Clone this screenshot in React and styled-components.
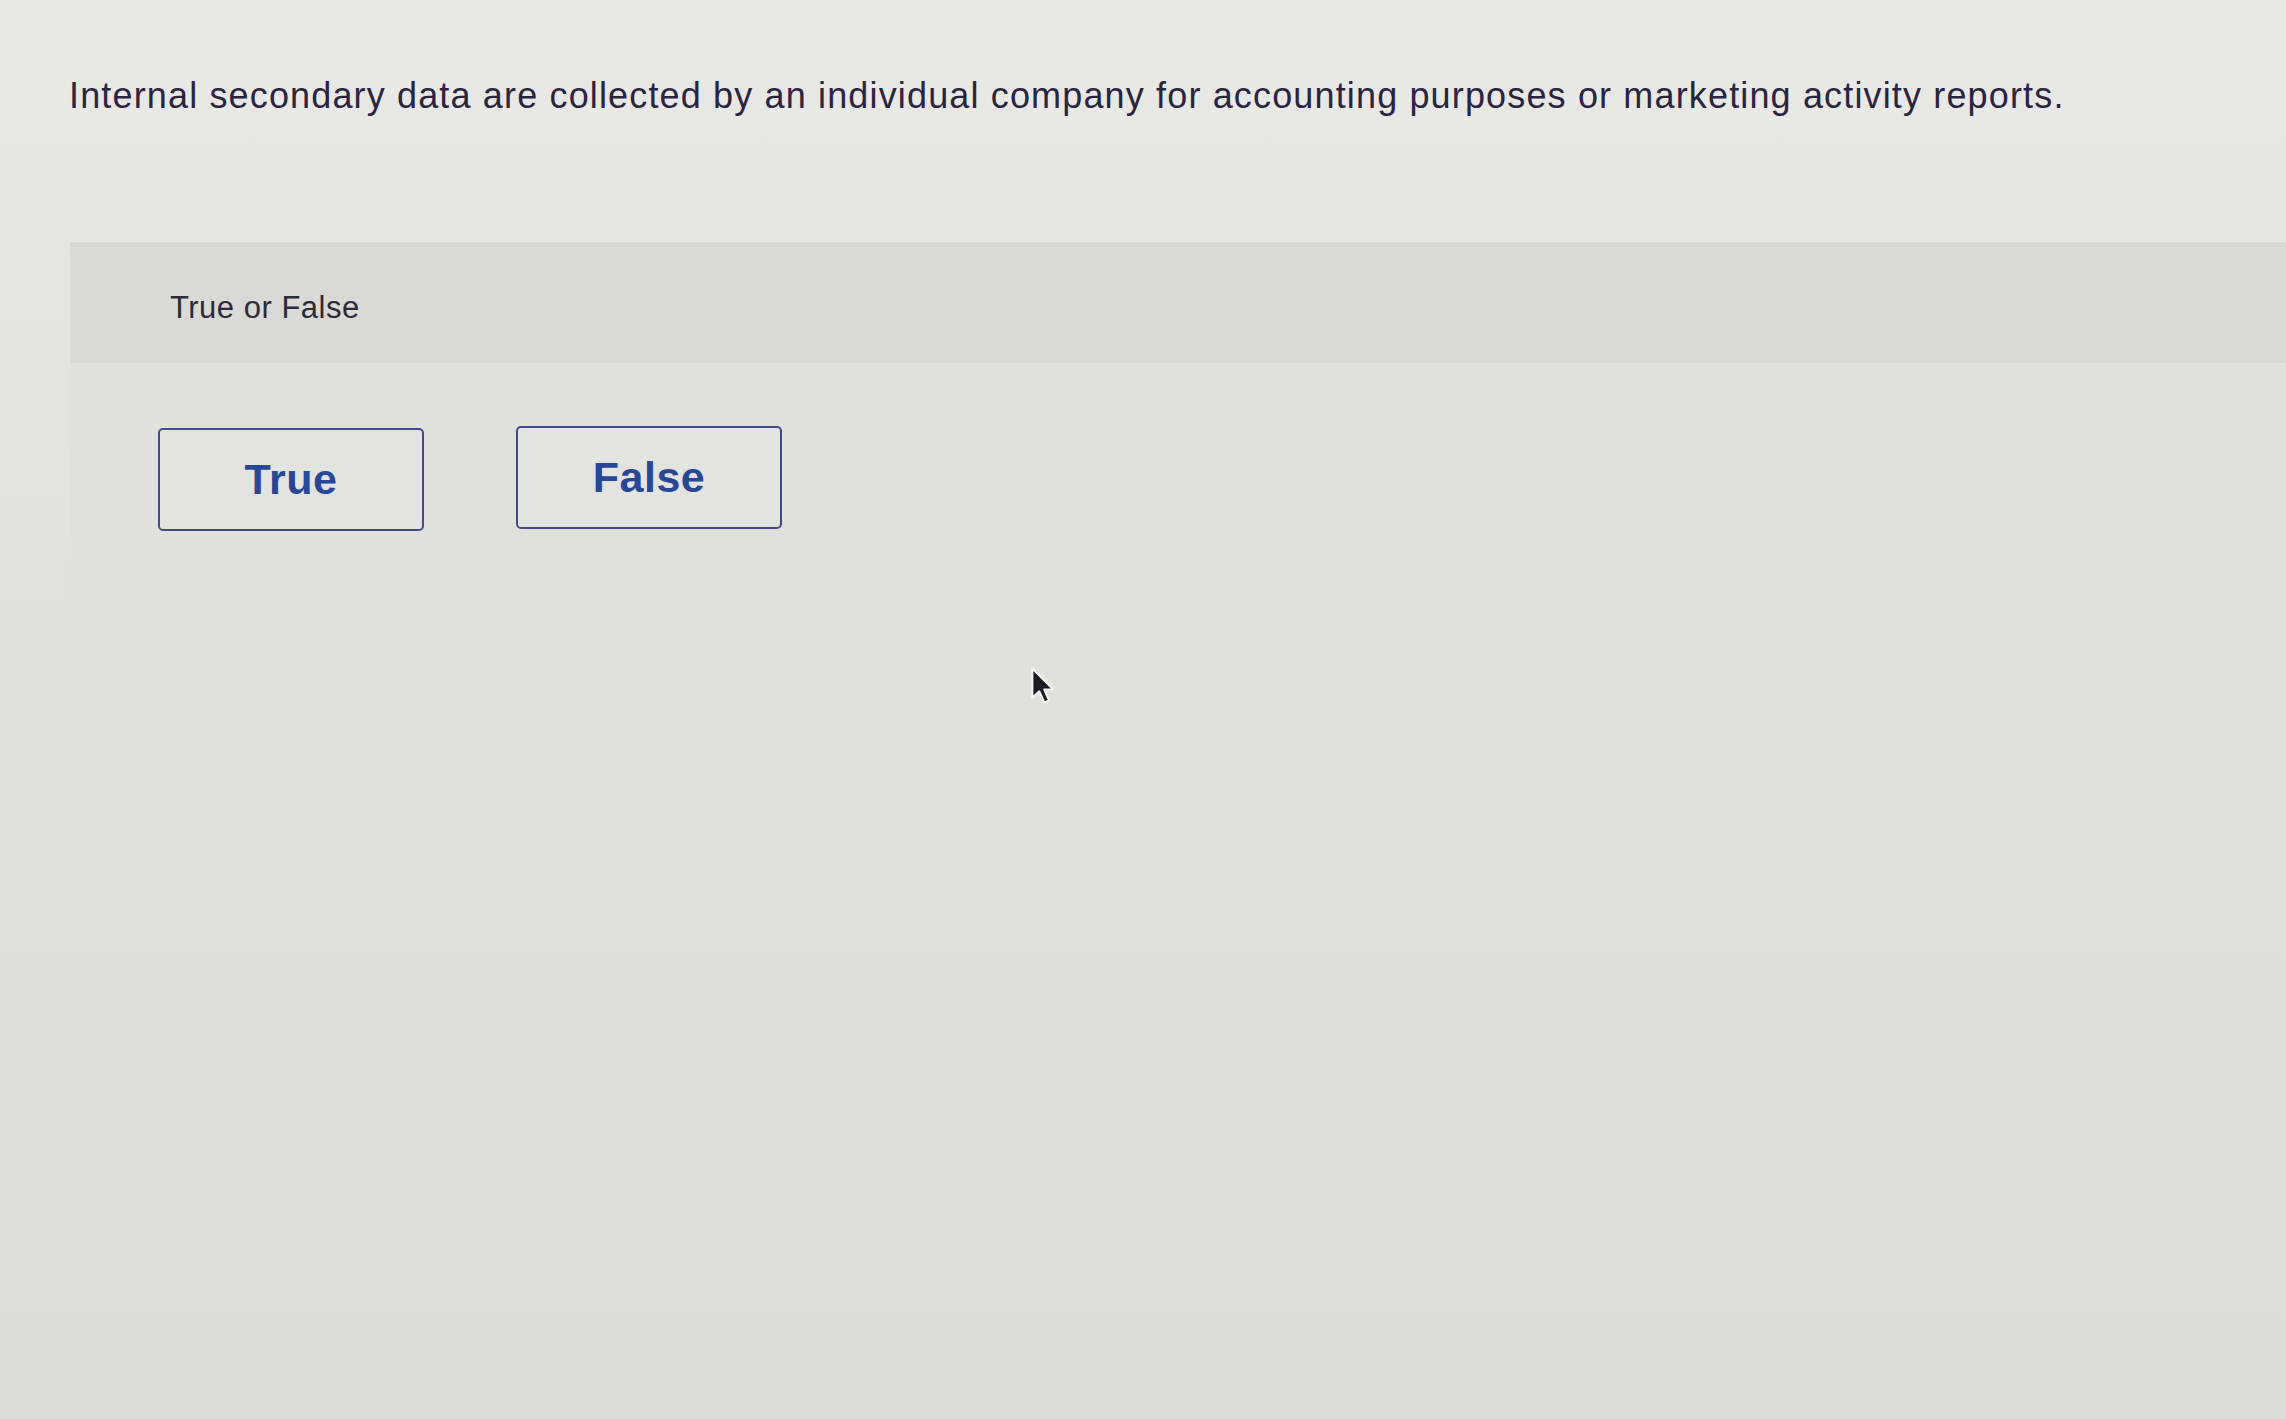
import styled, { createGlobalStyle } from 'styled-components';

const GlobalStyle = createGlobalStyle`
  html, body {
    margin: 0;
    padding: 0;
  }
  body {
    font-family: "Liberation Sans", Arial, sans-serif;
    background: linear-gradient(180deg, #e9e9e5 0%, #e2e2dd 40%, #dcdbd6 100%);
    min-height: 1419px;
  }
`;

const Page = styled.div`
  position: relative;
  width: 2286px;
  min-height: 1419px;
  overflow: hidden;
`;

const Question = styled.p`
  margin: 0;
  padding: 74px 0 0 69px;
  font-size: 36px;
  line-height: 43px;
  color: #2a2440;
  letter-spacing: 1.15px;
  white-space: nowrap;
`;

const Panel = styled.section`
  margin: 125px 0 0 70px;
  background: #e0e0dc;
`;

const PanelHeader = styled.div`
  height: 121px;
  box-sizing: border-box;
  padding: 47px 0 0 100px;
  background: #d9d9d5;
  font-size: 31px;
  line-height: 37px;
  letter-spacing: 0.5px;
  color: #2d2a3a;
`;

const PanelBody = styled.div`
  height: 309px;
  box-sizing: border-box;
  padding: 65px 0 0 88px;
  display: flex;
  gap: 92px;
  align-items: flex-start;
`;

const ChoiceButton = styled.button`
  width: 266px;
  height: 103px;
  box-sizing: border-box;
  border: 2px solid #434a8c;
  border-radius: 5px;
  background: #e3e3df;
  color: #27479a;
  font-family: "Liberation Sans", Arial, sans-serif;
  font-weight: 700;
  font-size: 43px;
  letter-spacing: 0.5px;
  cursor: pointer;
  margin-top: ${(p) => (p.$raised ? '-2px' : '0')};
`;

const Pointer = styled.svg`
  position: absolute;
  left: 1030px;
  top: 666px;
  width: 28px;
  height: 40px;
`;

export default function App() {
  return (
    <>
      <GlobalStyle />
      <Page>
        <Question>
          Internal secondary data are collected by an individual company for accounting purposes or marketing activity reports.
        </Question>
        <Panel>
          <PanelHeader>True or False</PanelHeader>
          <PanelBody>
            <ChoiceButton>True</ChoiceButton>
            <ChoiceButton $raised>False</ChoiceButton>
          </PanelBody>
        </Panel>
        <Pointer viewBox="0 0 12 17">
          <path
            d="M1 1 L1 13.5 L4 10.8 L6.2 15.6 L8.2 14.7 L6.1 10 L10 10 Z"
            fill="#1c1a24"
            stroke="#f4f4f2"
            strokeWidth="0.9"
            strokeLinejoin="round"
          />
        </Pointer>
      </Page>
    </>
  );
}
